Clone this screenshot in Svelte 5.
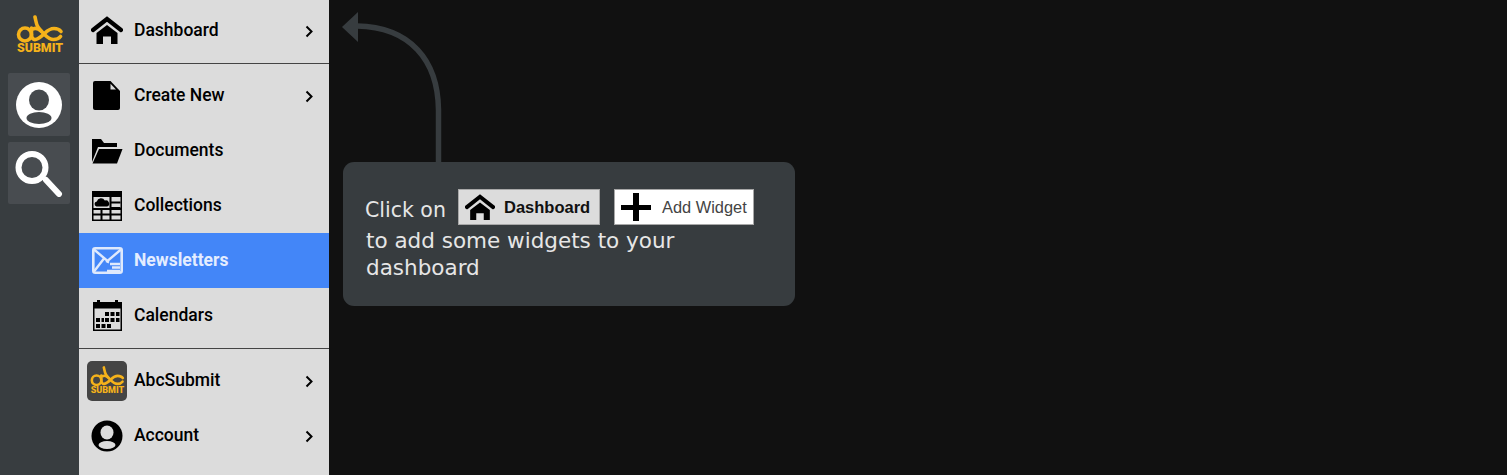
<script>
  const chevron = "M1.500 1.500L6.500 6.500 1.500 11.500";
</script>

{#snippet logo(w)}
  <svg class="logo" width={w} height={w * 40 / 48} viewBox="0 0 48 40">
    <g fill="none" stroke="#f5b21a" stroke-width="3.600" stroke-linecap="round">
      <circle cx="9" cy="19.500" r="6.500" />
      <path d="M15.500 13v7c0 3 2 5 4 4.500 3-.5 6-3 9-6 3-3 6-5 9.500-5 3 0 5.500 1 7 3" />
      <path d="M19 2c1 4 1 7 3 10 2 3 4 5 7 8 2.500 2.500 5 4.500 8.500 4.500 3 0 5.500-1 7-3" />
      <path d="M17 14c3-1.500 6 0 8 2" />
    </g>
    <text x="24" y="37" text-anchor="middle" textLength="46" lengthAdjust="spacingAndGlyphs" class="logo-text">SUBMIT</text>
  </svg>
{/snippet}

{#snippet user(fg, bg)}
  <svg class="ico" viewBox="0 0 32 32" width="32" height="32">
    <circle cx="16" cy="16" r="15.500" fill={fg} />
    <ellipse cx="16" cy="12.500" rx="6.500" ry="7" fill={bg} />
    <ellipse cx="16" cy="25" rx="8.500" ry="4" fill={bg} />
  </svg>
{/snippet}

{#snippet house(size)}
  <svg viewBox="0 0 32 28" width={size} height={size * 0.875}>
    <path d="M2 14L16 3l14 11" fill="none" stroke="#000" stroke-width="4.200" stroke-linecap="round" />
    <path d="M5.500 17L16 9l10.500 8v11H20v-7.500h-8V28H5.500z" fill="#000" />
  </svg>
{/snippet}

{#snippet chev()}
  <svg class="chev" viewBox="0 0 8 13" width="8" height="13">
    <path d={chevron} fill="none" stroke="#000" stroke-width="2" />
  </svg>
{/snippet}

<div class="page">
  <aside class="rail">
    <div class="brand">{@render logo(48)}</div>
    <button class="rail-btn tall" aria-label="Profile">
      <svg viewBox="0 0 48 48" width="48" height="48">
        <circle cx="24" cy="24" r="23" fill="#fff" />
        <ellipse cx="24" cy="19" rx="10" ry="10.500" fill="#45494c" />
        <ellipse cx="24" cy="37" rx="12.500" ry="6" fill="#45494c" />
      </svg>
    </button>
    <button class="rail-btn" aria-label="Search">
      <svg viewBox="0 0 48 48" width="48" height="48">
        <circle cx="17" cy="18.500" r="13.500" fill="none" stroke="#fff" stroke-width="6" />
        <path d="M31 31l13 14" stroke="#fff" stroke-width="6" stroke-linecap="round" />
      </svg>
    </button>
  </aside>

  <nav class="menu">
    <div class="group first">
      <a class="row">
        <span class="icon">{@render house(32)}</span>
        <span class="label">Dashboard</span>
        {@render chev()}
      </a>
    </div>
    <div class="group">
      <a class="row">
        <span class="icon">
          <svg class="doc" viewBox="0 0 27 29" width="27" height="29">
            <path d="M2 0h15.500L27 10v17a2 2 0 0 1-2 2H2a2 2 0 0 1-2-2V2a2 2 0 0 1 2-2z" fill="#000" />
            <path d="M17.500 2.800V8.500H23z" fill="#dcdcdc" />
          </svg>
        </span>
        <span class="label">Create New</span>
        {@render chev()}
      </a>
      <a class="row">
        <span class="icon">
          <svg viewBox="0 0 32 26" width="32" height="26">
            <path d="M1 24V1h9l3 4h13v4H7L1 24z" fill="#000" />
            <path d="M8 11h23.500L26 25.500H1.500z" fill="#000" />
          </svg>
        </span>
        <span class="label">Documents</span>
      </a>
      <a class="row">
        <span class="icon">
          <svg viewBox="0 0 30 30" width="30" height="30">
            <rect x="0" y="0" width="30" height="30" fill="#000" />
            <rect x="1.500" y="6" width="27" height="22.500" fill="#dcdcdc" />
            <path d="M1 18h28M1 23.500h28M9.500 18v11M18.500 6v23M18.500 11.500h10M18.500 17h10" stroke="#000" stroke-width="2" />
            <path d="M4.500 15.500a2.600 2.600 0 0 1 .3-5.100 4.300 4.300 0 0 1 8-.8 3 3 0 0 1 2.300 5.900z" fill="#000" />
          </svg>
        </span>
        <span class="label">Collections</span>
      </a>
      <a class="row active">
        <span class="icon">
          <svg viewBox="0 0 31 27" width="31" height="27">
            <rect x="1.300" y="1.300" width="28.400" height="24.400" rx="2" fill="none" stroke="#dfe9fc" stroke-width="2.600" />
            <path d="M2 2.500L15.500 14 29 2.500M2 24.500L12 11.500" fill="none" stroke="#dfe9fc" stroke-width="2.400" />
            <path d="M17 15.500L14 14" stroke="#dfe9fc" stroke-width="2" />
            <path d="M18 17h10M20 20.500h8M15 24h13" stroke="#dfe9fc" stroke-width="2.400" />
          </svg>
        </span>
        <span class="label">Newsletters</span>
      </a>
      <a class="row">
        <span class="icon">
          <svg viewBox="0 0 29 31" width="29" height="31">
            <path d="M0 2h4V0h3v2h15V0h3v2h4v29H0z" fill="#000" />
            <rect x="1.500" y="8.500" width="26" height="21" fill="#dcdcdc" />
            <g fill="#000">
              <rect x="12" y="12" width="4" height="4" /><rect x="17.500" y="12" width="4" height="4" /><rect x="23" y="12" width="3.500" height="4" />
              <rect x="3" y="18" width="4" height="4" /><rect x="8.500" y="18" width="2.500" height="4" /><rect x="12" y="18" width="4" height="4" /><rect x="17.500" y="18" width="4" height="4" /><rect x="23" y="18" width="3.500" height="4" />
              <rect x="3" y="24" width="4" height="4" /><rect x="8.500" y="24" width="4" height="4" /><rect x="14" y="24" width="4" height="4" />
            </g>
          </svg>
        </span>
        <span class="label">Calendars</span>
      </a>
    </div>
    <div class="group last">
      <a class="row">
        <span class="icon app-icon">{@render logo(35)}</span>
        <span class="label">AbcSubmit</span>
        {@render chev()}
      </a>
      <a class="row">
        <span class="icon">{@render user("#000", "#dcdcdc")}</span>
        <span class="label">Account</span>
        {@render chev()}
      </a>
    </div>
  </nav>

  <main class="main">
    <svg class="arrow" viewBox="0 0 110 162" width="110" height="162">
      <path d="M95.500 162V110C95 60 67 27 14 26" fill="none" stroke="#373c3f" stroke-width="5.500" />
      <path d="M-1 27L15 12v30z" fill="#373c3f" />
    </svg>
    <section class="tip">
      <div class="tip-line">
        <span class="click">Click on</span>
        <span class="chip grey">
          {@render house(30)}
          <b>Dashboard</b>
        </span>
        <span class="chip white">
          <svg viewBox="0 0 30 28" width="30" height="28">
            <path d="M0 12h12V0h6v12h12v5H18v11h-6V17H0z" fill="#000" />
          </svg>
          <span>Add Widget</span>
        </span>
      </div>
      <p>to add some widgets to your dashboard</p>
    </section>
  </main>
</div>

<style>
  :global(body) {
    background: #111;
  }

  .page {
    display: flex;
    height: 475px;
    overflow: hidden;
    font-family: Roboto, sans-serif;
  }

  .rail {
    flex: 0 0 79px;
    box-sizing: border-box;
    padding: 15px 8px 0;
    background: #383d40;
    display: flex;
    flex-direction: column;
    gap: 6px;
  }

  .brand {
    height: 52px;
    display: flex;
    justify-content: center;
    align-items: flex-start;
  }

  .logo-text {
    font: 900 12px Roboto, sans-serif;
    fill: #f5b21a;
  }

  .rail-btn {
    width: 62px;
    height: 62px;
    padding: 0;
    border: 0;
    border-radius: 2px;
    background: #484c50;
    display: flex;
    align-items: center;
    justify-content: center;
  }

  .rail-btn.tall {
    height: 63px;
  }

  .menu {
    flex: 0 0 250px;
    background: #dcdcdc;
  }

  .group {
    padding: 4px 0 5px;
    border-bottom: 1px solid #444;
  }

  .group.first {
    padding: 0 0 3px;
  }

  .group.first .row {
    height: 60px;
  }

  .group.first .label {
    margin-top: 0;
  }

  .group.last {
    border-bottom: 0;
  }

  .row {
    height: 55px;
    display: flex;
    align-items: center;
    padding: 0 16px 0 8px;
    color: #000;
    font-size: 17.500px;
    font-weight: 500;
  }

  .row.active {
    background: #4386f8;
    color: #e4edff;
    font-weight: 700;
  }

  .icon {
    flex: 0 0 40px;
    height: 40px;
    margin-right: 7px;
    display: flex;
    align-items: center;
    justify-content: center;
  }

  .doc {
    margin-left: -2px;
  }

  .app-icon {
    background: #444;
    border-radius: 5px;
  }

  .label {
    flex: 1;
    margin-top: -2px;
  }

  .chev {
    margin-top: 2px;
  }

  .main {
    flex: 1;
    padding-left: 14px;
  }

  .arrow {
    display: block;
    overflow: visible;
  }

  .tip {
    box-sizing: border-box;
    width: 452px;
    height: 144px;
    padding: 27px 22px 0 22px;
    background: #373c3f;
    border-radius: 11px;
    color: #e6e6e6;
    font: 21.500px/27px "DejaVu Sans", sans-serif;
  }

  .tip-line {
    display: flex;
    align-items: center;
    height: 36px;
  }

  .click {
    width: 93px;
    margin-top: 7px;
    font-size: 20.500px;
    white-space: nowrap;
  }

  .chip {
    height: 36px;
    box-sizing: border-box;
    display: flex;
    align-items: center;
    font-family: "Liberation Sans", sans-serif;
    border: 1px solid #a8a8a8;
  }

  .chip.grey {
    width: 142px;
    margin-right: 14px;
    padding-left: 6px;
    gap: 9px;
    background: #dcdcdc;
    color: #111;
    font-size: 16.500px;
  }

  .chip.white {
    width: 140px;
    padding-left: 6px;
    gap: 11px;
    background: #fff;
    color: #444;
    font-size: 16.400px;
  }

  .tip p {
    margin: 2px 0 0 1px;
    width: 340px;
  }
</style>
